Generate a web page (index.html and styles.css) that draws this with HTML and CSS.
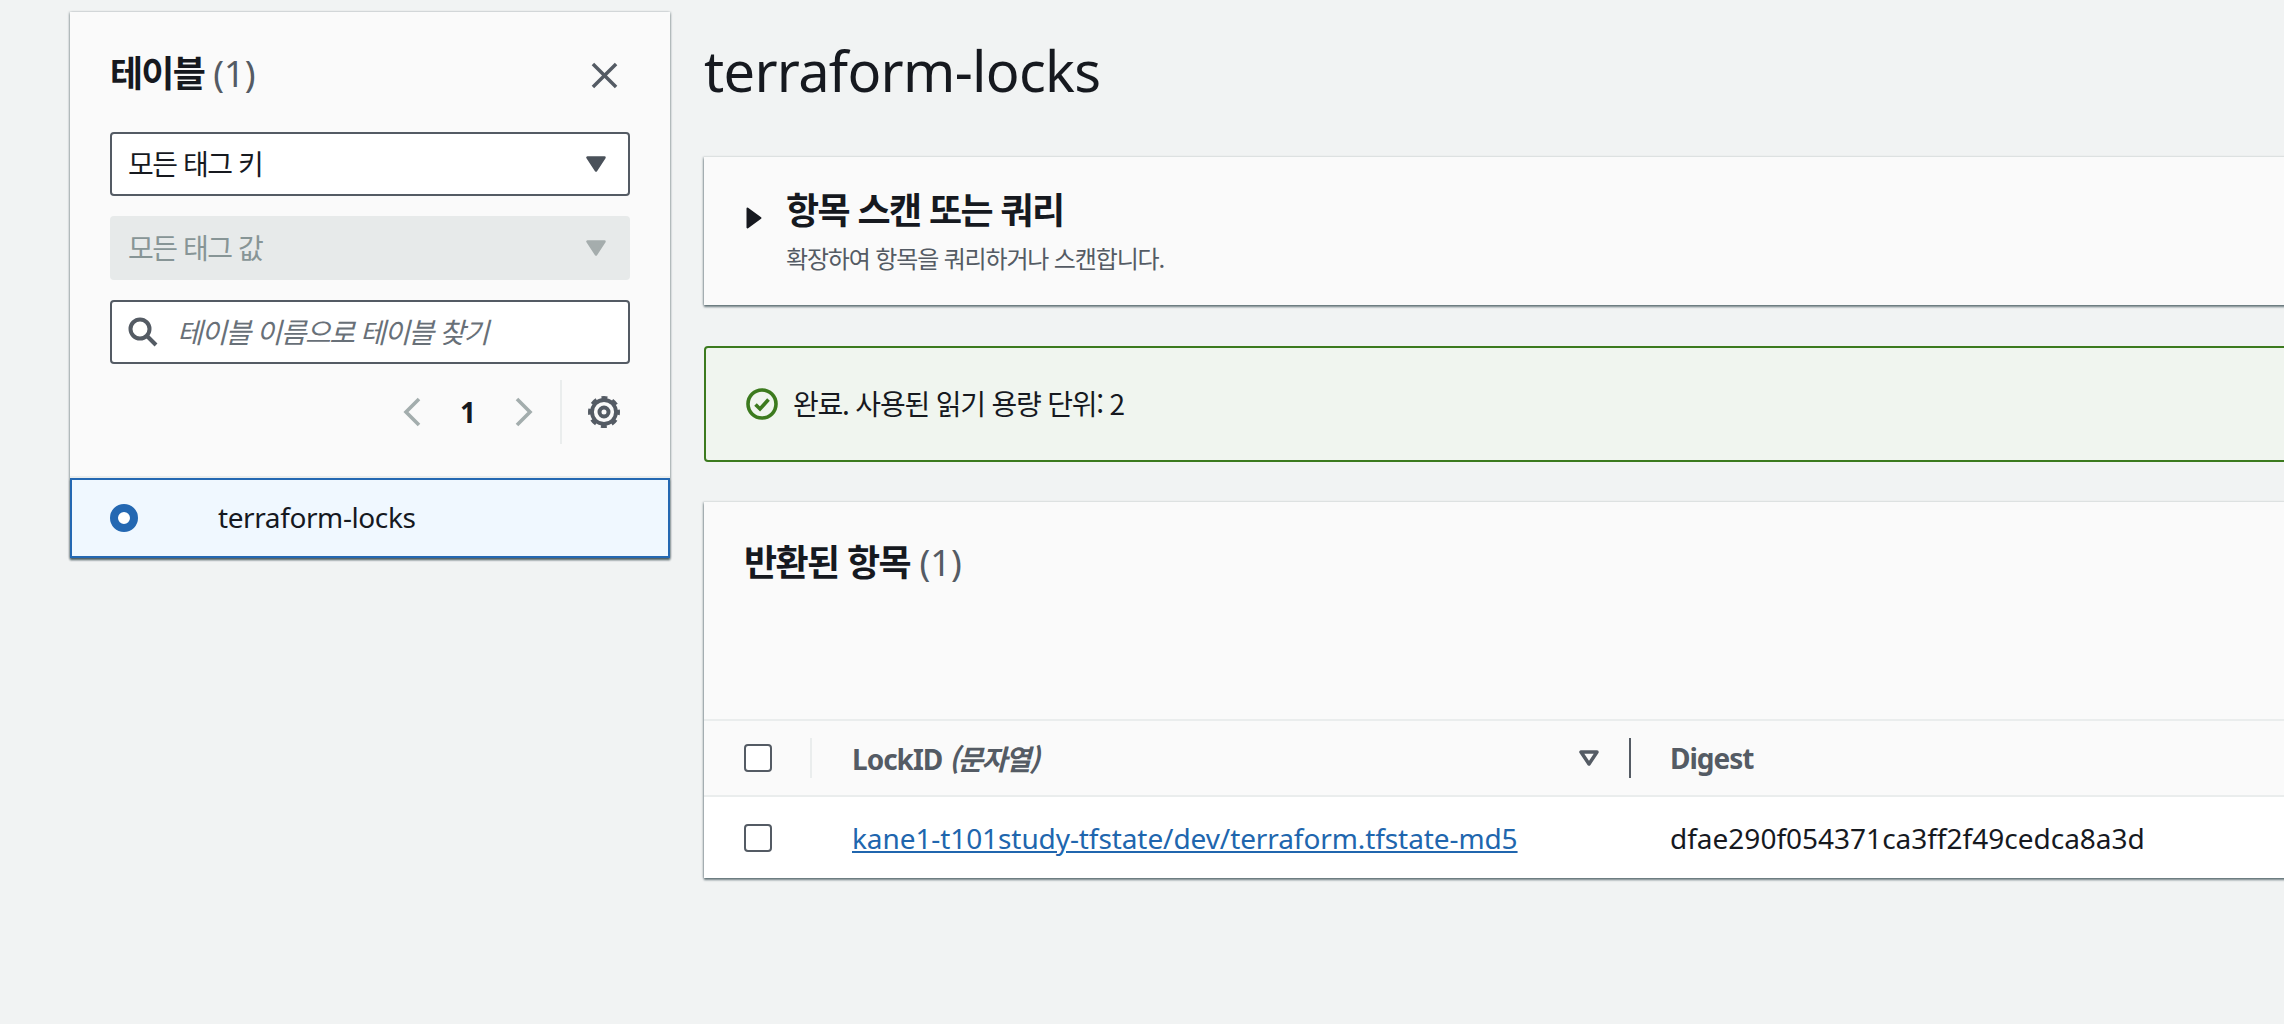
FILE: index.html
```html
<!DOCTYPE html>
<html lang="ko">
<head>
<meta charset="utf-8">
<title>terraform-locks</title>
<link rel="stylesheet" href="styles.css">
</head>
<body>
<div class="page">
  <aside class="panel">
    <div class="panel-body">
      <div class="panel-head">
        <h2 class="panel-title">테이블 <span class="count">(1)</span></h2>
        <svg class="close" viewBox="0 0 28 28"><path d="M2 2 26 26M26 2 2 26"/></svg>
      </div>
      <div class="field">
        <span class="field-text">모든 태그 키</span>
        <svg class="caret" viewBox="0 0 20 16"><path d="M1.500 1.500h17L10 14.500z"/></svg>
      </div>
      <div class="field field-off">
        <span class="field-text">모든 태그 값</span>
        <svg class="caret" viewBox="0 0 20 16"><path d="M1.500 1.500h17L10 14.500z"/></svg>
      </div>
      <div class="field search">
        <svg class="lens" viewBox="0 0 30 30"><circle cx="12" cy="12" r="9.500"/><path d="M19 19 28 28"/></svg>
        <span class="field-text placeholder">테이블 이름으로 테이블 찾기</span>
      </div>
      <div class="pager">
        <svg class="chev" viewBox="0 0 18 30"><path d="M16 2 3 15l13 13"/></svg>
        <span class="page-num">1</span>
        <svg class="chev" viewBox="0 0 18 30"><path d="M2 2l13 13L2 28"/></svg>
        <span class="pager-rule"></span>
        <svg class="gear" viewBox="0 0 32 32"><circle class="gear-ring" cx="16" cy="16" r="12"/><circle class="gear-teeth" cx="16" cy="16" r="14.500"/><circle class="gear-hub" cx="16" cy="16" r="4.500"/></svg>
      </div>
    </div>
    <div class="table-row-selected">
      <span class="radio"></span>
      <span class="row-name">terraform-locks</span>
    </div>
  </aside>
  <main class="main">
    <h1 class="title">terraform-locks</h1>
    <section class="card scan">
      <svg class="expander" viewBox="0 0 16 22"><path d="M1.500 1.500 14.500 11 1.500 20.500z"/></svg>
      <div>
        <h2 class="card-title">항목 스캔 또는 쿼리</h2>
        <p class="card-sub">확장하여 항목을 쿼리하거나 스캔합니다.</p>
      </div>
    </section>
    <div class="alert">
      <svg class="ok" viewBox="0 0 32 32"><circle cx="16" cy="16" r="14"/><path d="M9.500 16.500 14 21l8.500-9.500"/></svg>
      <span class="alert-text">완료. 사용된 읽기 용량 단위: 2</span>
    </div>
    <section class="card results">
      <h2 class="card-title results-title">반환된 항목 <span class="count">(1)</span></h2>
      <div class="grid-row grid-head">
        <div class="cell-check"><span class="box"></span><span class="rule"></span></div>
        <div class="cell-key">
          <span>LockID <em>(문자열)</em></span>
          <svg class="sort" viewBox="0 0 22 18"><path d="M3 3h16l-8 12z"/></svg>
          <span class="rule rule-dark"></span>
        </div>
        <div class="cell-val">Digest</div>
      </div>
      <div class="grid-row grid-data">
        <div class="cell-check"><span class="box"></span></div>
        <div class="cell-key"><a href="#" class="link">kane1-t101study-tfstate/dev/terraform.tfstate-md5</a></div>
        <div class="cell-val">dfae290f054371ca3ff2f49cedca8a3d</div>
      </div>
    </section>
  </main>
</div>
</body>
</html>
```

FILE: styles.css
```css
* { box-sizing: border-box; }
html, body { margin: 0; height: 100%; }
body {
  background: #f1f3f3;
  color: #16191f;
  font-family: "Noto Sans", "Noto Sans CJK KR", sans-serif;
  font-size: 28px;
  overflow: hidden;
}
h1, h2, p { margin: 0; }
.page { display: flex; align-items: flex-start; padding: 12px 0 0 70px; width: 2284px; height: 1024px; overflow: hidden; }

.panel { flex: 0 0 600px; box-shadow: 0 2px 2px rgba(0,28,36,.4), 1px 0 2px rgba(0,28,36,.2), -1px 0 2px rgba(0,28,36,.2); background: #fafafa; }
.panel-body { padding: 41px 40px 32px; border-bottom: 2px solid #eaeded; }
.panel-head { display: flex; align-items: center; justify-content: space-between; height: 44px; margin-bottom: 35px; padding-right: 12px; }
.panel-title { margin-top: -5px; font-family: "Noto Sans CJK KR", sans-serif; font-size: 36px; font-weight: 700; line-height: 44px; letter-spacing: -1.800px; }
.count { margin-left: 1px; font-family: "Noto Sans", sans-serif; font-weight: 400; color: #545b64; letter-spacing: 0; }
.close { width: 27px; height: 27px; fill: none; stroke: #545b64; stroke-width: 3.600; }
.field { display: flex; align-items: center; justify-content: space-between; height: 64px; margin-bottom: 20px; padding: 0 22px 0 16px; background: #fff; border: 2px solid #545b64; border-radius: 4px; font-family: "Noto Sans CJK KR", sans-serif; }
.field-text { padding-bottom: 3px; letter-spacing: -1.450px; }
.caret { width: 20px; height: 16px; fill: #4a515a; stroke: #4a515a; stroke-width: 2.500; stroke-linejoin: round; }
.field-off { background: #e7eaea; border-color: #e7eaea; color: #879596; }
.field-off .caret { fill: #a5adad; stroke: #a5adad; }
.search { justify-content: flex-start; gap: 19px; margin-bottom: 0; }
.lens { width: 30px; height: 30px; fill: none; stroke: #545b64; stroke-width: 4; }
.placeholder { font-style: italic; color: #687078; }
.pager { display: flex; align-items: center; height: 64px; margin-top: 16px; padding-left: 293px; }
.chev { width: 18px; height: 30px; fill: none; stroke: #a3adad; stroke-width: 3.600; flex: none; }
.page-num { width: 94px; text-align: center; font-weight: 700; }
.pager-rule { width: 2px; height: 64px; margin: 0 26px 0 27px; background: #eaeded; flex: none; }
.gear { width: 32px; height: 32px; fill: none; stroke: #545b64; flex: none; }
.gear-ring { stroke-width: 3.800; }
.gear-teeth { stroke-width: 3; stroke-dasharray: 6 5.390; stroke-dashoffset: 3; }
.gear-hub { stroke-width: 4; }
.table-row-selected { display: flex; align-items: center; height: 80px; padding-left: 38px; background: #f0f8ff; border: 2px solid #2468b2; box-shadow: 0 2px 2px rgba(0,28,36,.4); }
.radio { width: 28px; height: 28px; border-radius: 50%; border: 8px solid #2468b2; background: #fff; flex: none; }
.row-name { margin-left: 80px; padding-bottom: 2px; letter-spacing: -.4px; }

.main { flex: 1 1 0; min-width: 0; margin-left: 34px; margin-top: -12px; }
.title { font-size: 56px; font-weight: 400; line-height: 80px; padding-top: 30px; margin-bottom: 47px; letter-spacing: -.7px; }
.card { background: #fafafa; margin-right: -12px; box-shadow: 0 2px 2px rgba(0,28,36,.55), -1px 0 2px rgba(0,28,36,.25); }
.scan { display: flex; align-items: flex-start; height: 148px; padding: 29px 0 0 42px; }
.expander { width: 16px; height: 22px; margin-top: 21px; margin-right: 24px; fill: #16191f; stroke: #16191f; stroke-width: 2; stroke-linejoin: round; flex: none; }
.card-title { font-family: "Noto Sans CJK KR", sans-serif; font-size: 36px; font-weight: 700; line-height: 44px; letter-spacing: -1.600px; }
.card-sub { margin-top: 12px; font-family: "Noto Sans CJK KR", sans-serif; font-size: 24px; line-height: 32px; color: #545b64; letter-spacing: -1.150px; }
.alert { display: flex; align-items: center; gap: 15px; height: 116px; margin: 41px -12px 40px 0; padding-left: 40px; background: #f0f5ef; border: 2px solid #3c7a1e; border-radius: 4px; font-family: "Noto Sans CJK KR", sans-serif; }
.alert-text { padding-bottom: 3px; letter-spacing: -1.200px; }
.ok { width: 32px; height: 32px; fill: none; stroke: #3c7a1e; stroke-width: 3.600; flex: none; }
.results { height: 376px; }
.results-title { height: 217px; padding: 36px 0 0 40px; }
.grid-row { display: grid; grid-template-columns: 148px 818px 1fr; align-items: center; }
.grid-head { height: 78px; border-top: 2px solid #eaeded; border-bottom: 2px solid #eaeded; font-weight: 700; color: #545b64; letter-spacing: -1px; }
.grid-data { height: 81px; background: #fff; }
.cell-check { display: flex; align-items: center; padding-left: 40px; }
.box { width: 28px; height: 28px; background: #fff; border: 2px solid #545b64; border-radius: 4px; flex: none; }
.rule { width: 2px; height: 40px; margin-left: 38px; background: #eaeded; flex: none; }
.rule-dark { margin-left: 29px; background: #545b64; }
.cell-key { display: flex; align-items: center; }
.cell-key > span:first-child { margin-right: auto; padding-bottom: 1px; }
.cell-key em { font-family: "Noto Sans CJK KR", sans-serif; font-weight: 700; letter-spacing: -1.800px; }
.sort { width: 22px; height: 18px; fill: none; stroke: #545b64; stroke-width: 3.500; stroke-linejoin: round; flex: none; }
.grid-head .cell-key { padding-right: 39px; }
.link { color: #2066ae; text-decoration: underline; letter-spacing: -.09px; }
```
